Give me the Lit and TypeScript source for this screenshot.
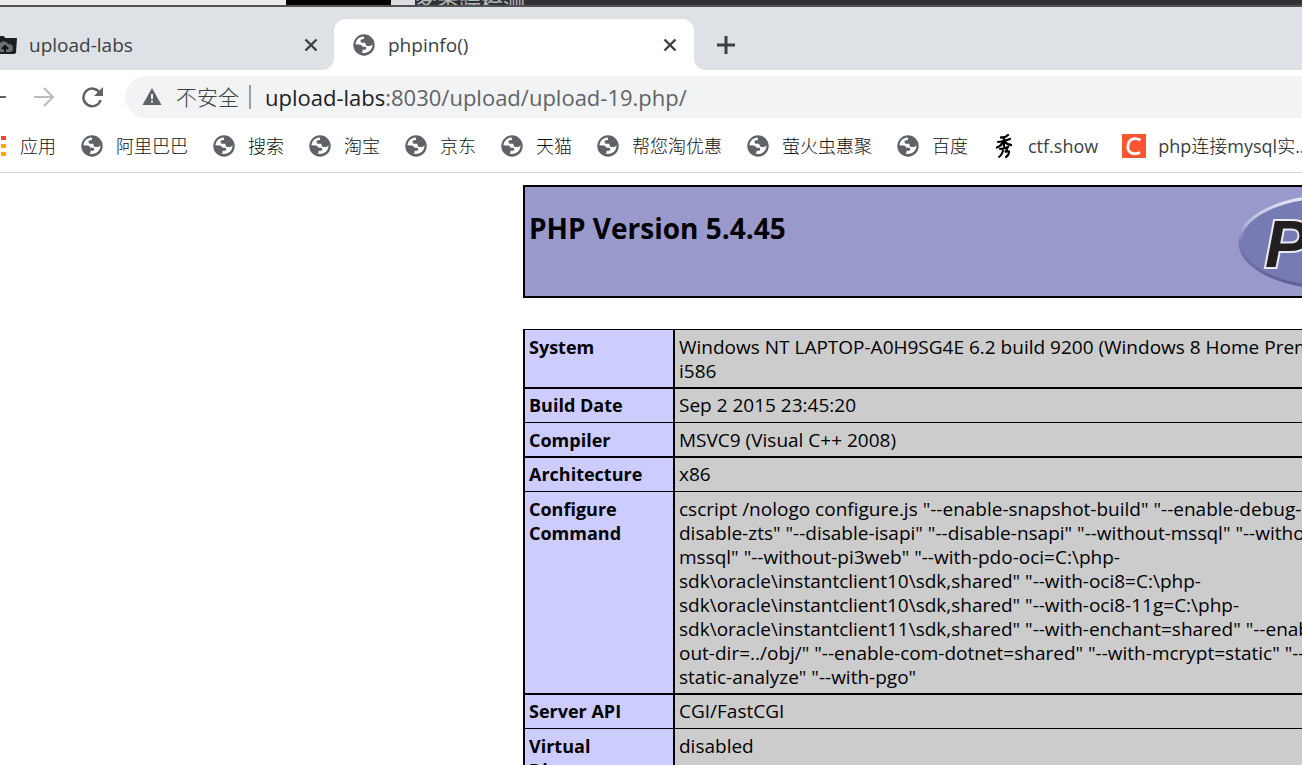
import { LitElement, html, css } from "lit";
import { customElement } from "lit/decorators.js";

const globe = html`<svg class="globe" viewBox="0 0 22 22" aria-hidden="true">
  <circle cx="11" cy="11" r="10.7" fill="#5f6368" />
  <path fill="#fff" d="M10.6 2.6C6.2 2.9 2.9 6 2.5 10.3l3.9.1c1.6 0 2.8.9 3.1 2.4h2.4c.9 0 1.3.6 1.3 1.4 0 1-.7 1.6-1.7 1.6H9.600v1.300c0 .8-.5 1.300-1.300 1.400 4.300 1.600 9-.6 10.600-4.700.5-1.200.6-2.600.5-3.900-.5 1.300-1.500 2-2.900 2h-2c-1.200 0-1.900-.7-1.900-1.800 0-.9-.6-1.400-1.500-1.400H9.500c-1.300 0-2-.8-2-1.800s.7-1.700 1.800-1.700h.6c.8 0 1.200-.5 1.200-1.200z" />
</svg>`;
const close = html`<svg class="close" viewBox="0 0 14 14" aria-hidden="true"><path d="M1.500 1.500l11 11M12.500 1.500l-11 11" /></svg>`;

const bookmarks = ["阿里巴巴", "搜索", "淘宝", "京东", "天猫", "帮您淘优惠", "萤火虫惠聚", "百度"];

const rows: [string[], string[]][] = [
  [["System"], ["Windows NT LAPTOP-A0H9SG4E 6.2 build 9200 (Windows 8 Home Premium Edition)", "i586"]],
  [["Build Date"], ["Sep 2 2015 23:45:20"]],
  [["Compiler"], ["MSVC9 (Visual C++ 2008)"]],
  [["Architecture"], ["x86"]],
  [["Configure", "Command"], [
    'cscript /nologo configure.js "--enable-snapshot-build" "--enable-debug-pack" "--',
    'disable-zts" "--disable-isapi" "--disable-nsapi" "--without-mssql" "--without-pdo-',
    'mssql" "--without-pi3web" "--with-pdo-oci=C:\\php-',
    'sdk\\oracle\\instantclient10\\sdk,shared" "--with-oci8=C:\\php-',
    'sdk\\oracle\\instantclient10\\sdk,shared" "--with-oci8-11g=C:\\php-',
    'sdk\\oracle\\instantclient11\\sdk,shared" "--with-enchant=shared" "--enable-object-',
    'out-dir=../obj/" "--enable-com-dotnet=shared" "--with-mcrypt=static" "--disable-',
    'static-analyze" "--with-pgo"',
  ]],
  [["Server API"], ["CGI/FastCGI"]],
  [["Virtual", "Directory", "Support"], ["disabled"]],
];

const lines = (parts: string[]) => parts.map((p, i) => (i ? html`<br />${p}` : p));

@customElement("app-root")
export class AppRoot extends LitElement {
  static styles = css`
    :host {
      display: flex;
      flex-direction: column;
      height: 100vh;
      overflow: hidden;
      background: #fff;
      color: #3c4043;
      font: 18px/24px "Open Sans", "Noto Sans CJK SC", sans-serif;
    }
    * { box-sizing: border-box; }
    button {
      display: flex;
      align-items: center;
      justify-content: center;
      padding: 0;
      border: 0;
      background: none;
      color: inherit;
      flex: none;
    }
    a { color: inherit; text-decoration: none; }
    svg { display: block; flex: none; }
    .desktop {
      display: flex;
      flex: none;
      height: 7px;
      overflow: hidden;
      background: #303134;
      border-bottom: 2px solid #525355;
    }
    .light { width: 286px; height: 7px; background: #ececec; }
    .dark { width: 105px; height: 7px; background: #030303; }
    .edge { width: 24px; height: 7px; background: #dcdcdc; }
    .behind { display: flex; align-items: center; height: 7px; color: #b6b8bb; font-size: 22px; line-height: 28px; white-space: nowrap; }
    .tabs { display: flex; flex: none; height: 63px; padding-top: 12px; background: #dee1e6; }
    .tab { display: flex; align-items: center; height: 51px; }
    .tab span { flex: 1; }
    .strip { background: linear-gradient(#dee1e6 26px, #fff 26px); }
    .first { width: 334px; padding-right: 13px; gap: 12px; background: #dee1e6; border-bottom-right-radius: 12px; font-size: 19px; }
    .active { width: 360px; padding: 0 14px 0 19px; gap: 13px; background: #fff; border-radius: 12px 12px 0 0; font-size: 19px; }
    .rest { flex: 1; }
    .rest .tab { padding-left: 22px; background: #dee1e6; border-bottom-left-radius: 12px; }
    .globe { width: 22px; height: 22px; }
    .close { width: 14px; height: 14px; fill: none; stroke: #3c4043; stroke-width: 2.4; }
    .close-btn { width: 20px; height: 20px; }
    .toolbar { display: flex; flex: none; align-items: center; height: 54px; }
    .nav { display: flex; align-items: center; width: 125px; }
    .address { display: flex; flex: 1; align-items: center; height: 42px; padding-left: 17px; border-radius: 21px 0 0 21px; background: #f1f3f4; font-size: 22px; color: #5f6368; white-space: nowrap; }
    .unsafe { margin: 0 10px 0 14px; font-size: 21px; font-weight: 300; color: #3c4043; }
    .sep { width: 2px; height: 24px; margin-right: 14px; background: #9aa0a6; }
    .host { color: #202124; }
    .bookmarks { display: flex; flex: none; align-items: center; height: 49px; padding-bottom: 5px; gap: 24px; border-bottom: 1px solid #d9dadc; white-space: nowrap; overflow: hidden; }
    .bookmarks a { display: flex; align-items: center; flex: none; gap: 12px; }
    .bookmarks .globe { margin: 0 1px; }
    .cjk { font-weight: 300; color: #101113; }
    main { flex: 1; min-height: 0; overflow: hidden; padding: 12px 0 0 523px; color: #000; }
    .banner { display: flex; justify-content: space-between; width: 900px; height: 113px; padding: 5px 4px; border: 2px solid #000; background: #9999cc; }
    h1 { margin: 20px 0 0; font-size: 28px; line-height: 32px; font-weight: 700; }
    .logo { width: 180px; height: 100px; }
    .logo text { font: italic bold 66px "Liberation Sans", sans-serif; fill: #231f20; stroke: #e8e8f0; stroke-width: 4px; paint-order: stroke; }
    table { width: 900px; margin-top: 31px; border-spacing: 0; border-left: 2px solid #000; border-right: 2px solid #000; white-space: nowrap; table-layout: fixed; }
    th, td { padding: 5px 4px 4px; border-top: 2px solid #000; vertical-align: top; text-align: left; overflow: hidden; }
    tr:nth-child(odd) > * { border-top-width: 1px; }
    tr:nth-child(even) > * { padding: 4px 4px 5px; }
    th { width: 148px; background: #ccccff; font-weight: 700; }
    td { background: #cccccc; border-left: 2px solid #000; font-size: 19px; }
  `;

  render() {
    return html`
      <div class="desktop"><div class="light"></div><div class="dark"></div><div class="edge"></div><div class="behind">客类端检测-</div></div>
      <header class="tabs">
        <div class="strip">
          <div class="tab first">
            <svg width="17" height="20" viewBox="0 0 17 20" aria-hidden="true"><path d="M0 1h4l1 2h12l-1 15-2 1H0z" fill="#1c1f22" /><path d="M0 8q5-4 8 1 5 0 5 4t-3 4H0z" fill="#6d6f70" /><path d="M5 17v-5M2 14l3-3 3 3" stroke="#111" stroke-width="2" fill="none" /></svg>
            <span>upload-labs</span><button class="close-btn" aria-label="Close">${close}</button>
          </div>
        </div>
        <div class="strip"><div class="tab active">${globe}<span>phpinfo()</span><button class="close-btn" aria-label="Close">${close}</button></div></div>
        <div class="strip rest">
          <div class="tab"><button aria-label="New tab"><svg width="20" height="20" viewBox="0 0 20 20"><path d="M10 1v18M1 10h18" stroke="#3c4043" stroke-width="3" /></svg></button></div>
        </div>
      </header>
      <nav class="toolbar">
        <div class="nav">
          <button aria-label="Back"><svg width="34" height="20" viewBox="0 0 34 20"><path d="M0 10h6" stroke="#5f6368" stroke-width="2" /></svg></button>
          <button aria-label="Forward"><svg width="20" height="20" viewBox="0 0 20 20"><path d="M0 10h18M10 1l9 9-9 9" fill="none" stroke="#babcbe" stroke-width="2.2" /></svg></button>
          <button aria-label="Reload"><svg width="76" height="22" viewBox="0 0 76 22"><path d="M45.800 7A8.800 8.800 0 1 0 46.600 14" fill="none" stroke="#5f6368" stroke-width="2.500" /><path d="M49 1v9h-9z" fill="#5f6368" /></svg></button>
        </div>
        <div class="address">
          <svg width="20" height="18" viewBox="0 0 20 18" aria-hidden="true"><path d="M10 0l9.500 17H.5z" fill="#5f6368" /><path d="M10 6v5M10 12.500v2" stroke="#f1f3f4" stroke-width="2" /></svg>
          <span class="unsafe">不安全</span><span class="sep"></span><span class="host">upload-labs</span><span>:8030/upload/upload-19.php/</span>
        </div>
      </nav>
      <nav class="bookmarks">
        <a href="#"><svg width="8" height="22" viewBox="0 0 8 22" aria-hidden="true"><path d="M1 1h5v4H1z" fill="#f44336" /><path d="M1 9h5v4H1zM1 17h5v4H1z" fill="#f9ab00" /></svg><span class="cjk">应用</span></a>
        ${bookmarks.map((b) => html`<a href="#">${globe}<span class="cjk">${b}</span></a>`)}
        <a href="#"><svg width="24" height="26" viewBox="0 0 24 26" aria-hidden="true" fill="none" stroke="#000" stroke-linecap="round"><path d="M16 2Q13 5 9 4.500" stroke-width="2.400" /><path d="M6 9Q12 8.500 18 6M12 4.500v9" stroke-width="2.200" /><path d="M11 9Q9 13 5 14.500M13 9q2 2.500 6 3" stroke-width="2.400" /><path d="M8 16q5-.5 8-2-1 3-3 5 3-1 4-.500 0 4-3 5.500M11 16q0 5-4 8" stroke-width="2" /></svg><span>ctf.show</span></a>
        <a href="#"><svg width="24" height="24" viewBox="0 0 24 24" aria-hidden="true"><path d="M0 0h24v24H0z" fill="#fc5531" /><path d="M18.500 6q-8-3.500-11.500 2-3 7 1.500 10.500 4 2.500 9.500 0" fill="none" stroke="#fff" stroke-width="2.800" /></svg><span>php<span class="cjk">连接</span>mysql<span class="cjk">实</span>...</span></a>
      </nav>
      <main>
        <div class="banner"><h1>PHP Version 5.4.45</h1>
          <svg class="logo" viewBox="0 0 180 100" aria-hidden="true">
            <defs><linearGradient id="rim" x1="0" y1="0" x2="0" y2="1"><stop offset="0" stop-color="#e6e7f3" /><stop offset=".3" stop-color="#b4b6da" /><stop offset=".5" stop-color="#777bb3" /><stop offset="1" stop-color="#5c5e94" /></linearGradient></defs>
            <ellipse cx="91" cy="50" rx="88" ry="45" fill="#777bb3" stroke="url(#rim)" stroke-width="3" />
            <text x="28" y="75">PHP</text>
          </svg>
        </div>
        <table><tbody>${rows.map(([k, v]) => html`<tr><th scope="row">${lines(k)}</th><td>${lines(v)}</td></tr>`)}</tbody></table>
      </main>
    `;
  }
}
